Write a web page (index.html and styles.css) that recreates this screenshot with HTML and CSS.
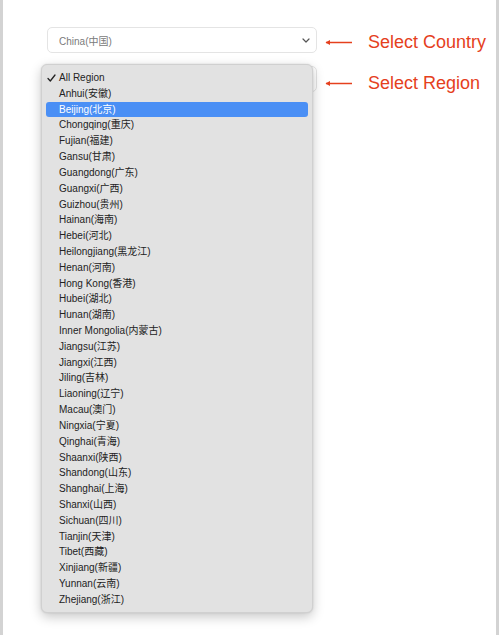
FILE: index.html
```html
<!DOCTYPE html>
<html lang="en">
<head>
<meta charset="utf-8">
<title>Select Region</title>
<link rel="stylesheet" href="styles.css">
</head>
<body>
<div class="panel">
  <div class="form">
    <div class="row">
      <div class="select">
        <span class="select-value">China(中国)</span>
        <svg class="chevron" width="8" height="5" viewBox="0 0 8 5"><path d="M1 1 L4 4 L7 1" fill="none" stroke="#555" stroke-width="1.2" stroke-linecap="round" stroke-linejoin="round"/></svg>
      </div>
      <div class="note note-country">
        <svg class="arrow" width="28" height="7" viewBox="0 0 28 7"><path d="M1 3.5 H27" stroke="#e5401d" stroke-width="1.5"/><path d="M0.5 3.5 L5 1 L5 6 Z" fill="#e5401d"/></svg>
        <span class="note-text">Select Country</span>
      </div>
    </div>
    <div class="row">
      <div class="select">
        <span class="select-value">All Region</span>
        <svg class="chevron" width="8" height="5" viewBox="0 0 8 5"><path d="M1 1 L4 4 L7 1" fill="none" stroke="#555" stroke-width="1.2" stroke-linecap="round" stroke-linejoin="round"/></svg>
      </div>
      <div class="note note-region">
        <svg class="arrow" width="28" height="7" viewBox="0 0 28 7"><path d="M1 3.5 H27" stroke="#e5401d" stroke-width="1.5"/><path d="M0.5 3.5 L5 1 L5 6 Z" fill="#e5401d"/></svg>
        <span class="note-text">Select Region</span>
      </div>
    </div>
  </div>

  <ul class="dropdown">
    <li class="opt checked"><svg class="check" width="9" height="8" viewBox="0 0 9 8"><path d="M1 4.5 L3.3 7 L8 1" fill="none" stroke="#222" stroke-width="1.3" stroke-linecap="round" stroke-linejoin="round"/></svg>All Region</li>
    <li class="opt">Anhui(安徽)</li>
    <li class="opt active">Beijing(北京)</li>
    <li class="opt">Chongqing(重庆)</li>
    <li class="opt">Fujian(福建)</li>
    <li class="opt">Gansu(甘肃)</li>
    <li class="opt">Guangdong(广东)</li>
    <li class="opt">Guangxi(广西)</li>
    <li class="opt">Guizhou(贵州)</li>
    <li class="opt">Hainan(海南)</li>
    <li class="opt">Hebei(河北)</li>
    <li class="opt">Heilongjiang(黑龙江)</li>
    <li class="opt">Henan(河南)</li>
    <li class="opt">Hong Kong(香港)</li>
    <li class="opt">Hubei(湖北)</li>
    <li class="opt">Hunan(湖南)</li>
    <li class="opt">Inner Mongolia(内蒙古)</li>
    <li class="opt">Jiangsu(江苏)</li>
    <li class="opt">Jiangxi(江西)</li>
    <li class="opt">Jiling(吉林)</li>
    <li class="opt">Liaoning(辽宁)</li>
    <li class="opt">Macau(澳门)</li>
    <li class="opt">Ningxia(宁夏)</li>
    <li class="opt">Qinghai(青海)</li>
    <li class="opt">Shaanxi(陕西)</li>
    <li class="opt">Shandong(山东)</li>
    <li class="opt">Shanghai(上海)</li>
    <li class="opt">Shanxi(山西)</li>
    <li class="opt">Sichuan(四川)</li>
    <li class="opt">Tianjin(天津)</li>
    <li class="opt">Tibet(西藏)</li>
    <li class="opt">Xinjiang(新疆)</li>
    <li class="opt">Yunnan(云南)</li>
    <li class="opt">Zhejiang(浙江)</li>
  </ul>
</div>
</body>
</html>
```

FILE: styles.css
```css
* { box-sizing: border-box; }

html, body {
  margin: 0;
  padding: 0;
}

body {
  background: #d3d3d3;
  font-family: "Liberation Sans", Arial, "Noto Sans CJK SC", sans-serif;
  width: 499px;
  height: 635px;
  overflow: hidden;
}

.panel {
  position: relative;
  margin-left: 3px;
  width: 493px;
  height: 635px;
  background: #ffffff;
}

.form {
  display: flex;
  flex-direction: column;
  gap: 10px;
  padding: 27px 0 0 44px;
}

.row {
  display: flex;
  align-items: center;
}

.select {
  display: flex;
  align-items: center;
  justify-content: space-between;
  width: 270px;
  height: 26px;
  padding: 0 6px 0 11px;
  border: 1px solid #e4e4e4;
  border-radius: 5px;
  background: #ffffff;
}

.select-value {
  font-size: 10px;
  color: #7a7a7a;
}

.chevron { display: block; }

.note {
  display: flex;
  align-items: center;
  margin-left: 8px;
}

.note-country { padding-top: 4px; }
.note-region { padding-top: 10px; }

.arrow { display: block; }

.note-text {
  margin-left: 15px;
  font-size: 18px;
  color: #e5401d;
  letter-spacing: 0;
}

.dropdown {
  position: absolute;
  left: 38px;
  top: 64px;
  width: 272px;
  margin: 0;
  padding: 5px 4px 4px;
  list-style: none;
  background: #e2e2e2;
  border: 1px solid #d0d0d0;
  border-radius: 6px;
  box-shadow: 0 4px 12px rgba(0, 0, 0, 0.22), 0 0 2px rgba(0, 0, 0, 0.12);
}

.opt {
  position: relative;
  height: 15.82px;
  line-height: 15.82px;
  padding-left: 13px;
  font-size: 10px;
  color: #232323;
  border-radius: 3px;
  white-space: nowrap;
}

.opt.active {
  background: #4a8ff5;
  color: #ffffff;
}

.check {
  position: absolute;
  left: 1px;
  top: 4px;
}
```
